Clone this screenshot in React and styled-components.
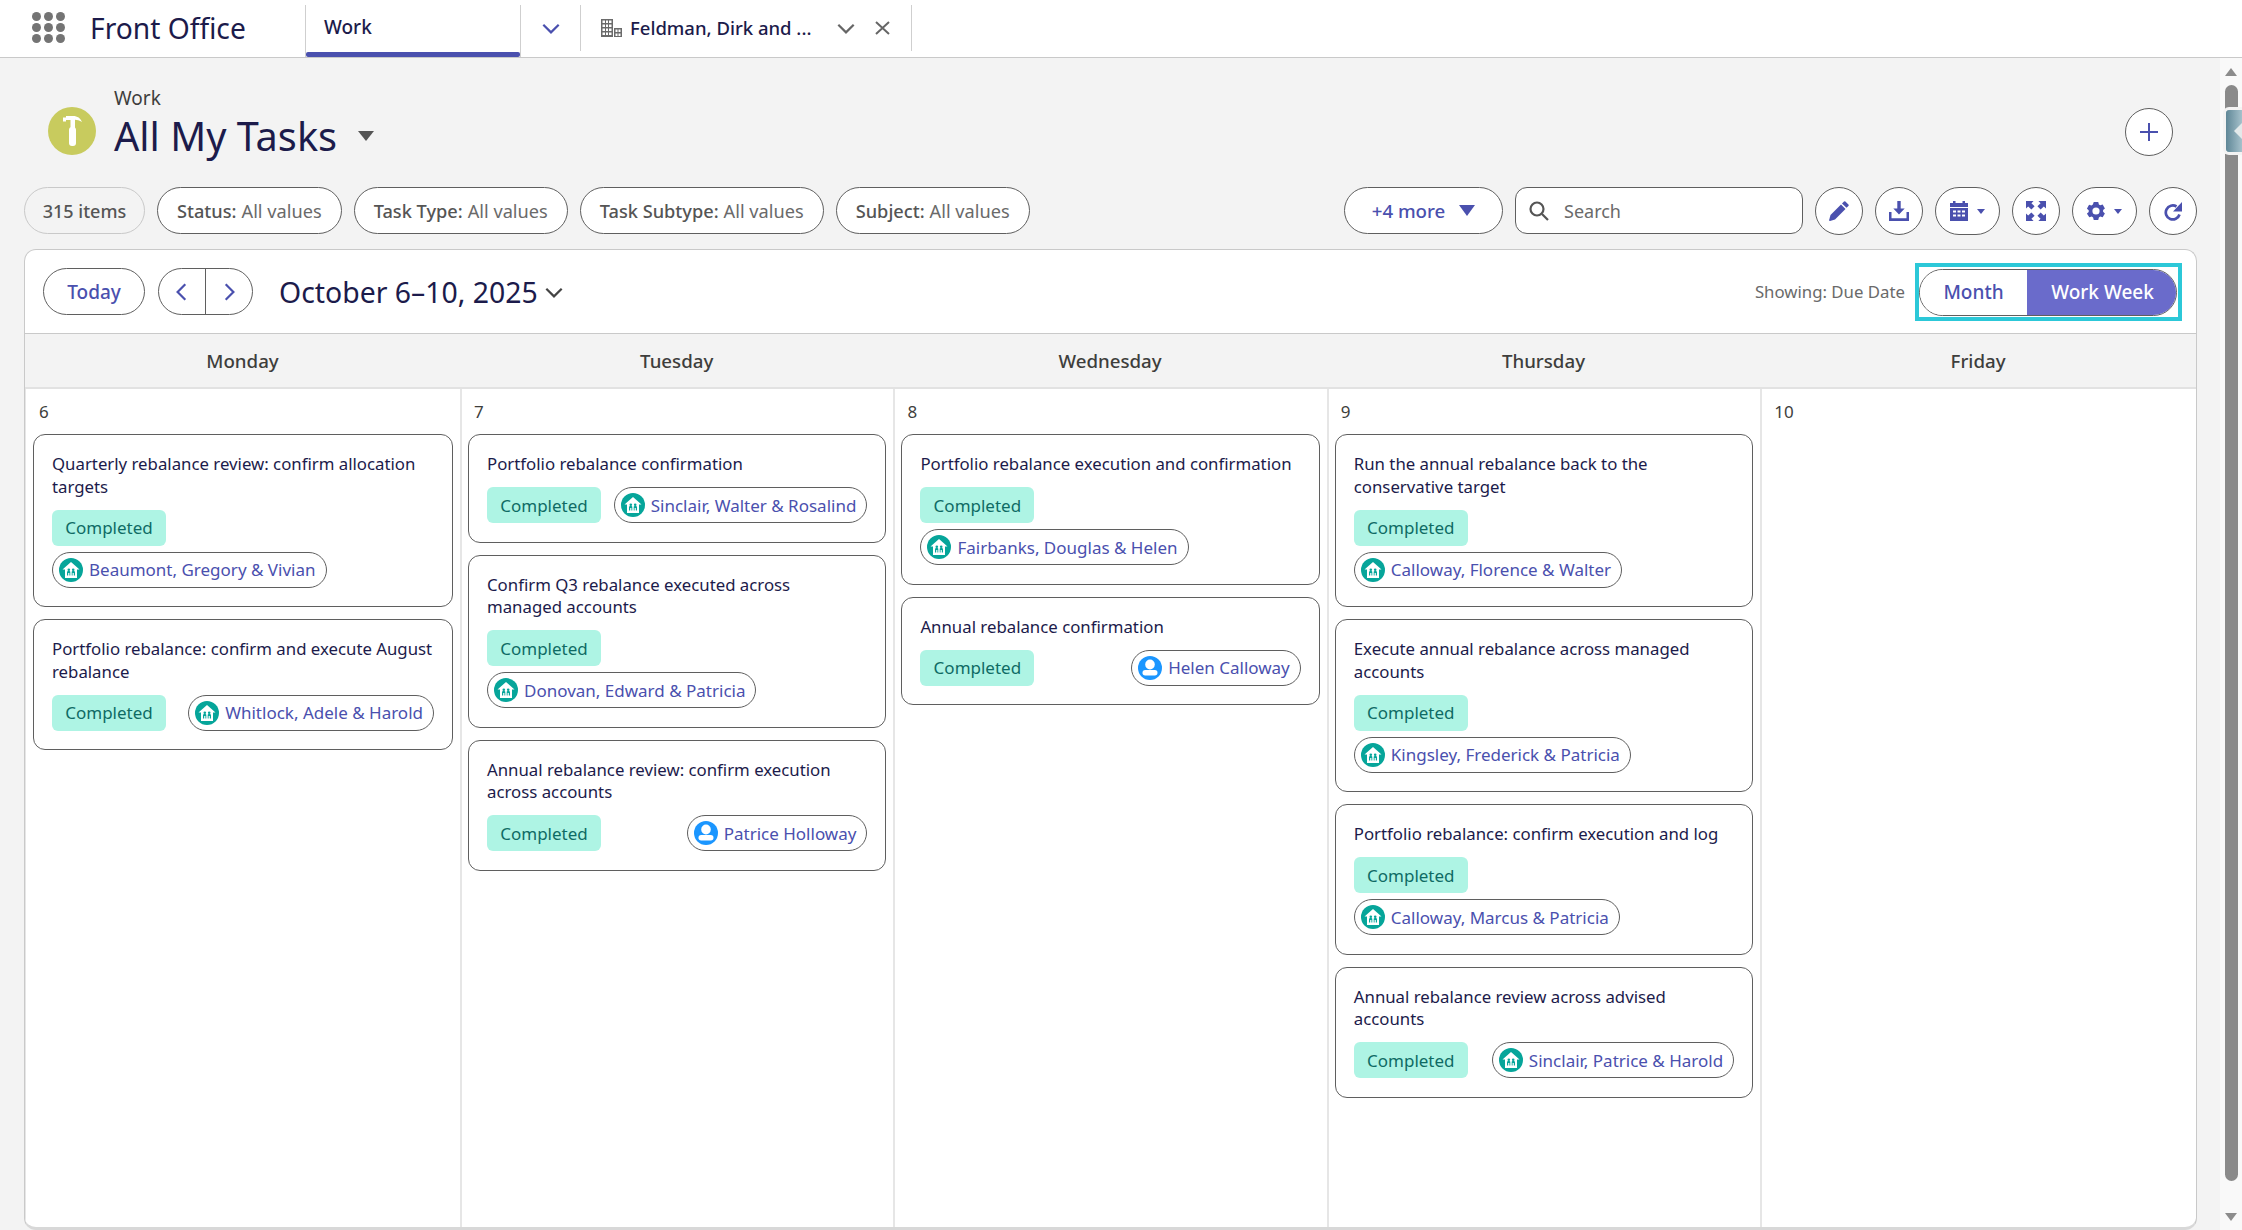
import React from 'react'
import styled, { createGlobalStyle } from 'styled-components'

const INDIGO = '#4a50ae'
const NAVY = '#1c1b4b'
const LINE = '#5f5f5f'
const COLUMNS = '435px repeat(3, 433.400px) 1fr'

const Global = createGlobalStyle`
  html, body {
    margin: 0;
    height: 100%;
    overflow: hidden;
  }
  body {
    background: #f3f3f3;
    font-family: "Noto Sans", "Open Sans", sans-serif;
    color: #3e3e3c;
  }
`

const Shell = styled.div`
  width: 2242px;
  height: 1230px;
  display: flex;
  flex-direction: column;
  overflow: hidden;
`
const TopBar = styled.header`
  height: 58px;
  flex: none;
  box-sizing: border-box;
  background: #fff;
  border-bottom: 1px solid #c9c9c9;
  display: flex;
  align-items: stretch;
  padding: 5px 0 0 32px;
`
const Dots = styled.div`
  width: 33px;
  height: 31px;
  margin-top: 7px;
  display: grid;
  grid-template-columns: repeat(3, 9px);
  grid-auto-rows: 9px;
  justify-content: space-between;
  align-content: space-between;
`
const Dot = styled.i`
  border-radius: 50%;
  background: #747474;
`
const AppName = styled.div`
  width: 240px;
  padding-left: 25px;
  box-sizing: border-box;
  font-size: 28.2px;
  line-height: 46px;
  color: ${NAVY};
  white-space: nowrap;
`
const Tab = styled.div`
  width: 216px;
  box-sizing: border-box;
  border-left: 1px solid #cfcfcf;
  border-right: 1px solid #cfcfcf;
  padding-left: 18px;
  font-size: 19px;
  font-weight: 500;
  line-height: 44px;
  color: ${NAVY};
  position: relative;
  &::after {
    content: '';
    position: absolute;
    left: 0;
    right: 0;
    bottom: 0;
    height: 5px;
    border-radius: 2px;
    background: ${INDIGO};
  }
`
const TabMenu = styled.div`
  width: 60px;
  height: 46px;
  display: flex;
  align-items: center;
  justify-content: center;
  border-right: 1px solid #cfcfcf;
  box-sizing: border-box;
`
const RecordTab = styled.div`
  width: 331px;
  height: 46px;
  box-sizing: border-box;
  display: flex;
  align-items: center;
  padding: 0 0 1px 20px;
  border-right: 1px solid #cfcfcf;
  color: ${NAVY};
  font-size: 18.500px;
  font-weight: 500;
`
const RecordName = styled.span`
  margin-left: 8px;
  width: 205px;
  white-space: nowrap;
`
const RecordClose = styled.svg`
  margin-left: 18px;
`
const Body = styled.div`
  flex: 1;
  min-height: 0;
  display: flex;
`
const Main = styled.main`
  flex: 1;
  min-width: 0;
  padding: 0 23px 0 24px;
  display: flex;
  flex-direction: column;
`
const Heading = styled.div`
  height: 129px;
  flex: none;
  box-sizing: border-box;
  display: flex;
  align-items: flex-start;
  padding: 27px 0 0 24px;
  position: relative;
`
const Badge = styled.div`
  width: 48px;
  height: 48px;
  margin-top: 22px;
  border-radius: 50%;
  background: #c8cb5e;
  display: flex;
  align-items: center;
  justify-content: center;
`
const TitleBlock = styled.div`
  margin-left: 18px;
`
const Crumb = styled.div`
  font-size: 19px;
  line-height: 26px;
  color: #3e3e3c;
`
const PageTitle = styled.h1`
  margin: 0;
  font-size: 39.700px;
  font-weight: 400;
  line-height: 50px;
  color: ${NAVY};
  display: flex;
  align-items: center;
`
const TitleCaret = styled.i`
  margin-left: 21px;
  border-left: 8px solid transparent;
  border-right: 8px solid transparent;
  border-top: 10px solid #555;
`
const Round = styled.button`
  width: ${p => p.$w || 48}px;
  height: 48px;
  flex: none;
  padding: 0;
  box-sizing: border-box;
  border: 1px solid ${LINE};
  border-radius: 24px;
  background: #fff;
  display: flex;
  align-items: center;
  justify-content: center;
  gap: 9px;
  color: ${INDIGO};
`
const AddWrap = styled.div`
  position: absolute;
  right: 24px;
  top: 50px;
`
const Filters = styled.div`
  height: 62px;
  flex: none;
  display: flex;
  align-items: flex-start;
  gap: 12px;
`
const Count = styled.div`
  height: 47px;
  width: 121px;
  box-sizing: border-box;
  border: 1px solid #c9c9c9;
  border-radius: 24px;
  display: flex;
  align-items: center;
  justify-content: center;
  font-size: 18px;
  font-weight: 500;
  color: #555;
`
const Filter = styled.div`
  height: 47px;
  box-sizing: border-box;
  padding: 0 19px;
  border: 1px solid ${LINE};
  border-radius: 24px;
  background: #fff;
  display: flex;
  align-items: center;
  font-size: 18.200px;
  color: #6a6a6a;
  white-space: nowrap;
  b {
    font-weight: 500;
    color: #555;
    margin-right: 5px;
  }
`
const Spacer = styled.div`
  flex: 1;
`
const More = styled.div`
  width: 159px;
  height: 47px;
  box-sizing: border-box;
  border: 1px solid ${LINE};
  border-radius: 24px;
  background: #fff;
  display: flex;
  align-items: center;
  justify-content: center;
  gap: 14px;
  color: ${INDIGO};
  font-size: 18.700px;
  font-weight: 500;
`
const MoreCaret = styled.i`
  border-left: 8px solid transparent;
  border-right: 8px solid transparent;
  border-top: 11px solid ${INDIGO};
`
const Search = styled.div`
  width: 288px;
  height: 47px;
  box-sizing: border-box;
  border: 1px solid ${LINE};
  border-radius: 12px;
  background: #fff;
  display: flex;
  align-items: center;
  gap: 14px;
  padding-left: 12px;
  font-size: 18px;
  color: #6a6a6a;
`
const SmallCaret = styled.i`
  border-left: 4.500px solid transparent;
  border-right: 4.500px solid transparent;
  border-top: 5px solid ${INDIGO};
`
const Panel = styled.section`
  flex: 1;
  min-height: 0;
  box-sizing: border-box;
  background: #fff;
  border: 1px solid #c9c9c9;
  border-bottom: 3px solid #d8d8d8;
  border-radius: 12px;
  display: flex;
  flex-direction: column;
  overflow: hidden;
`
const CalBar = styled.div`
  height: 84px;
  flex: none;
  box-sizing: border-box;
  padding: 0 14px 0 18px;
  display: flex;
  align-items: center;
  border-bottom: 1px solid #c9c9c9;
`
const Today = styled.div`
  width: 102px;
  height: 47px;
  box-sizing: border-box;
  border: 1px solid ${LINE};
  border-radius: 24px;
  display: flex;
  align-items: center;
  justify-content: center;
  color: ${INDIGO};
  font-size: 19px;
  font-weight: 500;
`
const Pager = styled.div`
  margin-left: 13px;
  width: 95px;
  height: 47px;
  box-sizing: border-box;
  border: 1px solid ${LINE};
  border-radius: 24px;
  display: flex;
`
const PageBtn = styled.div`
  flex: 1;
  display: flex;
  align-items: center;
  justify-content: center;
  & + & {
    border-left: 1px solid ${LINE};
  }
`
const RangeTitle = styled.div`
  margin-left: 26px;
  font-size: 28.400px;
  color: ${NAVY};
  display: flex;
  align-items: center;
  gap: 5px;
  white-space: nowrap;
`
const Showing = styled.div`
  margin-left: auto;
  font-size: 16.800px;
  color: #6a6a6a;
  margin-right: 10px;
  white-space: nowrap;
`
const Outline = styled.div`
  padding: 2px 1px 1px 0;
  border: 4px solid #2cc8d8;
  display: flex;
`
const ViewSwitch = styled.div`
  width: 258px;
  height: 47px;
  box-sizing: border-box;
  border: 1px solid ${LINE};
  border-radius: 24px;
  display: flex;
  overflow: hidden;
  font-size: 19px;
  font-weight: 500;
`
const ViewOption = styled.div`
  width: ${p => (p.$active ? 151 : 107)}px;
  flex: none;
  display: flex;
  align-items: center;
  justify-content: center;
  color: ${p => (p.$active ? '#fff' : INDIGO)};
  background: ${p => (p.$active ? '#6a6bcb' : '#fff')};
`
const DayHeads = styled.div`
  height: 55px;
  flex: none;
  box-sizing: border-box;
  background: #f3f3f3;
  border-bottom: 2px solid #e2e2e2;
  display: grid;
  grid-template-columns: ${COLUMNS};
`
const DayHead = styled.div`
  display: flex;
  align-items: center;
  justify-content: center;
  font-size: 18.700px;
  font-weight: 500;
  color: #3e3e3c;
`
const Week = styled.div`
  flex: 1;
  min-height: 0;
  display: grid;
  grid-template-columns: ${COLUMNS};
`
const Day = styled.div`
  box-sizing: border-box;
  padding: 0 7px 0 6px;
  border-left: 2px solid #e6e6e6;
  &:first-child {
    padding-left: 7px;
    border-left: 1px solid #e6e6e6;
  }
`
const DayNum = styled.div`
  height: 45px;
  padding: 11px 0 0 6px;
  box-sizing: border-box;
  font-size: 17px;
  line-height: 24px;
  color: #3e3e3c;
`
const Card = styled.article`
  box-sizing: border-box;
  border: 1px solid ${LINE};
  border-radius: 12px;
  padding: 18px 18px 18.500px;
  & + & {
    margin-top: 12px;
  }
`
const CardTitle = styled.div`
  font-size: 16.800px;
  line-height: 22.500px;
  color: ${NAVY};
`
const Meta = styled.div`
  margin-top: 11.500px;
  display: flex;
  flex-wrap: wrap;
  justify-content: space-between;
  gap: 6px 10px;
`
const Status = styled.div`
  width: 114px;
  height: 36px;
  border-radius: 6px;
  background: #aef4e4;
  color: #0f6b64;
  font-size: 17px;
  display: flex;
  align-items: center;
  justify-content: center;
`
const Who = styled.div`
  height: 36px;
  box-sizing: border-box;
  border: 1px solid ${LINE};
  border-radius: 18px;
  padding: 0 10px 0 6px;
  display: flex;
  align-items: center;
  gap: 6px;
  color: ${INDIGO};
  font-size: 17px;
  white-space: nowrap;
`
const Avatar = styled.span`
  width: 24px;
  height: 24px;
  flex: none;
  border-radius: 50%;
  background: ${p => (p.$person ? '#1b96ff' : '#06a59a')};
  display: flex;
  align-items: center;
  justify-content: center;
`
const ScrollBar = styled.aside`
  width: 22px;
  flex: none;
  background: #f9f9f9;
  position: relative;
  display: flex;
  flex-direction: column;
  align-items: center;
`
const ScrollArrow = styled.i`
  margin-top: ${p => (p.$down ? '32px' : '10px')};
  border-left: 6px solid transparent;
  border-right: 6px solid transparent;
  ${p => (p.$down ? 'border-top' : 'border-bottom')}: 8px solid #8c8c8c;
`
const ScrollThumb = styled.div`
  width: 13px;
  height: 1096px;
  margin-top: 9px;
  border-radius: 7px;
  background: #8a8a8a;
`
const Handle = styled.div`
  position: absolute;
  left: 3px;
  top: 49px;
  width: 19px;
  height: 48px;
  box-sizing: border-box;
  border: 3px solid #f3f3f3;
  border-right: 0;
  border-radius: 6px 0 0 6px;
  background: linear-gradient(90deg, #5f8797, #a6c1cb);
  display: flex;
  align-items: center;
  justify-content: flex-end;
`
const HandleTip = styled.i`
  border-top: 8px solid transparent;
  border-bottom: 8px solid transparent;
  border-right: 8px solid #e3e9ea;
`

const Chevron = ({ dir = 'down', color = INDIGO, size = 22 }) => {
  const points = { down: '3,7 10,14 17,7', left: '13,3 6,10 13,17', right: '7,3 14,10 7,17' }
  return (
    <svg width={size} height={size} viewBox="0 0 20 20" fill="none" stroke={color} strokeWidth="2">
      <polyline points={points[dir]} />
    </svg>
  )
}

const Building = () => (
  <svg width="21" height="18" viewBox="0 0 21 18" fill="#6b6b6b">
    <path fillRule="evenodd" d="M0 0h12v18H0zM1.500 1.500v2.500h2.500V1.500zm3.500 0v2.500h2V1.500zm3 0v2.500h2.500V1.500zM1.500 5.500V8h2.500V5.500zm3.500 0V8h2V5.500zm3 0V8h2.500V5.500zM1.500 9.500V12h2.500V9.500zm3.500 0V12h2V9.500zm3 0V12h2.500V9.500zM1.500 13.500V16h2.500v-2.500zm3.500 0V16h2v-2.500zm3 0V16h2.500v-2.500z" />
    <path fillRule="evenodd" d="M13 9h8v9h-8zm1.500 1.500V13h2v-2.500zm3 0V13h2v-2.500zm-3 4V17h2v-2.500zm3 0V17h2v-2.500z" />
  </svg>
)

const Hammer = () => (
  <svg width="19" height="30" viewBox="0 0 19 30" fill="#fff">
    <path d="M0 1.500h3V0h7c4.500 0 7.500 2.300 9 6-2.500-1.500-5-2.300-7-2.300V6H7.500V4H3V5.500H0z" />
    <rect x="7.500" y="6" width="4.500" height="9" />
    <rect x="6" y="11" width="7" height="19" rx="3" />
  </svg>
)

const HouseIcon = () => (
  <svg width="18" height="18" viewBox="0 0 18 18">
    <path fill="#fff" d="M9 1 17.500 8.500H15V17H3V8.500H.5z" />
    <g fill="#06a59a">
      <circle cx="6.800" cy="8.800" r="1.300" />
      <circle cx="11.200" cy="8.800" r="1.300" />
      <path d="M5 11c0-.7.900-1 1.800-1s1.500.3 1.500 1v3.500H7.400V12H6.200v2.500H5z" />
      <path d="M9.700 11c0-.7.600-1 1.500-1s1.800.3 1.800 1v3.500h-1.200V12h-1.200v2.500h-.9z" />
    </g>
  </svg>
)

const PersonIcon = () => (
  <svg width="24" height="24" viewBox="0 0 24 24" fill="#fff">
    <ellipse cx="12" cy="8.500" rx="4.800" ry="5" />
    <rect x="4.500" y="14" width="15" height="5.500" rx="2.700" />
  </svg>
)

const PencilIcon = () => (
  <svg width="20" height="20" viewBox="0 0 20 20" fill={INDIGO}>
    <path d="M15 0.500a1 1 0 0 1 1.400 0l3 3a1 1 0 0 1 0 1.400L17.500 6.800 13 2.500z" />
    <path d="M12 3.500 16.500 8 6 18.500 1 20l-1-.5L1.500 14z" />
  </svg>
)

const Download = () => (
  <svg width="20" height="20" viewBox="0 0 20 20" fill={INDIGO}>
    <path d="M8.300 0h3.400v7.500h4L10 13.500l-5.700-6h4z" />
    <path d="M0 11h2.500v6.300h15V11H20v9H0z" />
  </svg>
)

const CalendarIcon = () => (
  <svg width="18" height="20" viewBox="0 0 18 20" fill={INDIGO}>
    <path fillRule="evenodd" d="M3 0h2.500v2h7V0H15v2h3v4H0V2h3zM0 7h18v13H0zM3 9.500v2h3v-2zm4.500 0v2h3v-2zm4.500 0v2h3v-2zM3 13.500v2h3v-2zm4.500 0v2h3v-2zm4.500 0v2h3v-2z" />
  </svg>
)

const Expand = () => (
  <svg width="20" height="20" viewBox="0 0 21 21" fill={INDIGO}>
    <path d="M0 0h8L5.700 2.300 9 5.600 5.600 9 2.300 5.700 0 8z" />
    <path d="M21 0v8l-2.300-2.300L15.400 9 12 5.600l3.300-3.300L13 0z" />
    <path d="M0 21v-8l2.300 2.300L5.600 12 9 15.400l-3.300 3.300L8 21z" />
    <path d="M21 21h-8l2.300-2.300L12 15.400 15.400 12l3.300 3.300L21 13z" />
  </svg>
)

const Gear = () => (
  <svg width="18" height="20" viewBox="0 0 20 20" fill={INDIGO}>
    <path fillRule="evenodd" d="M7.500 0h5l.7 2.700 1.500.9 2.700-.8 2.500 4.300-2 1.900v1.800l2 1.900-2.500 4.300-2.700-.8-1.500.9-.7 2.800h-5l-.7-2.800-1.500-.9-2.700.8L-.1 13l2-1.900V9.300L-.1 7.400 2.300 3l2.700.8 1.500-.9zM10 6a4 4 0 1 0 0 8 4 4 0 0 0 0-8z" />
  </svg>
)

const Refresh = () => (
  <svg width="18" height="19" viewBox="0 0 18 19" fill="none" stroke={INDIGO} strokeWidth="2.700">
    <path d="M15.500 12.500A7 7 0 1 1 12.500 4.500" />
    <path d="M18 0v9.500H9z" fill={INDIGO} stroke="none" />
  </svg>
)

const SearchIcon = () => (
  <svg width="22" height="22" viewBox="0 0 22 22" fill="none" stroke="#555" strokeWidth="2.200">
    <circle cx="9" cy="9" r="6.500" />
    <line x1="14" y1="14" x2="20" y2="20" />
  </svg>
)

const Plus = () => (
  <svg width="22" height="22" viewBox="0 0 22 22" stroke={INDIGO} strokeWidth="2">
    <line x1="11" y1="2" x2="11" y2="20" />
    <line x1="2" y1="11" x2="20" y2="11" />
  </svg>
)

const days = [
  {
    name: 'Monday', num: 6,
    tasks: [
      { title: 'Quarterly rebalance review: confirm allocation targets', who: 'Beaumont, Gregory & Vivian' },
      { title: 'Portfolio rebalance: confirm and execute August rebalance', who: 'Whitlock, Adele & Harold' },
    ],
  },
  {
    name: 'Tuesday', num: 7,
    tasks: [
      { title: 'Portfolio rebalance confirmation', who: 'Sinclair, Walter & Rosalind' },
      { title: 'Confirm Q3 rebalance executed across managed accounts', who: 'Donovan, Edward & Patricia' },
      { title: 'Annual rebalance review: confirm execution across accounts', who: 'Patrice Holloway', person: true },
    ],
  },
  {
    name: 'Wednesday', num: 8,
    tasks: [
      { title: 'Portfolio rebalance execution and confirmation', who: 'Fairbanks, Douglas & Helen' },
      { title: 'Annual rebalance confirmation', who: 'Helen Calloway', person: true },
    ],
  },
  {
    name: 'Thursday', num: 9,
    tasks: [
      { title: 'Run the annual rebalance back to the conservative target', who: 'Calloway, Florence & Walter' },
      { title: 'Execute annual rebalance across managed accounts', who: 'Kingsley, Frederick & Patricia' },
      { title: 'Portfolio rebalance: confirm execution and log', who: 'Calloway, Marcus & Patricia' },
      { title: 'Annual rebalance review across advised accounts', who: 'Sinclair, Patrice & Harold' },
    ],
  },
  { name: 'Friday', num: 10, tasks: [] },
]

const filters = ['Status', 'Task Type', 'Task Subtype', 'Subject']

const TaskCard = ({ task }) => (
  <Card>
    <CardTitle>{task.title}</CardTitle>
    <Meta>
      <Status>Completed</Status>
      <Who>
        <Avatar $person={task.person}>{task.person ? <PersonIcon /> : <HouseIcon />}</Avatar>
        {task.who}
      </Who>
    </Meta>
  </Card>
)

const App = () => (
  <Shell>
    <Global />
    <TopBar>
      <Dots>{Array.from({ length: 9 }, (_, i) => <Dot key={i} />)}</Dots>
      <AppName>Front Office</AppName>
      <Tab>Work</Tab>
      <TabMenu><Chevron /></TabMenu>
      <RecordTab>
        <Building />
        <RecordName>Feldman, Dirk and ...</RecordName>
        <Chevron color="#666" />
        <RecordClose width="15" height="14" viewBox="0 0 15 14" stroke="#666" strokeWidth="2">
          <path d="M1 1l13 12M14 1L1 13" />
        </RecordClose>
      </RecordTab>
    </TopBar>
    <Body>
      <Main>
        <Heading>
          <Badge><Hammer /></Badge>
          <TitleBlock>
            <Crumb>Work</Crumb>
            <PageTitle>All My Tasks<TitleCaret /></PageTitle>
          </TitleBlock>
          <AddWrap><Round><Plus /></Round></AddWrap>
        </Heading>
        <Filters>
          <Count>315 items</Count>
          {filters.map(f => <Filter key={f}><b>{f}:</b> All values</Filter>)}
          <Spacer />
          <More>+4 more<MoreCaret /></More>
          <Search><SearchIcon />Search</Search>
          <Round><PencilIcon /></Round>
          <Round><Download /></Round>
          <Round $w={65}><CalendarIcon /><SmallCaret /></Round>
          <Round><Expand /></Round>
          <Round $w={65}><Gear /><SmallCaret /></Round>
          <Round><Refresh /></Round>
        </Filters>
        <Panel>
          <CalBar>
            <Today>Today</Today>
            <Pager>
              <PageBtn><Chevron dir="left" /></PageBtn>
              <PageBtn><Chevron dir="right" /></PageBtn>
            </Pager>
            <RangeTitle>October 6–10, 2025<Chevron color="#444" /></RangeTitle>
            <Showing>Showing: Due Date</Showing>
            <Outline>
              <ViewSwitch>
                <ViewOption>Month</ViewOption>
                <ViewOption $active>Work Week</ViewOption>
              </ViewSwitch>
            </Outline>
          </CalBar>
          <DayHeads>{days.map(d => <DayHead key={d.name}>{d.name}</DayHead>)}</DayHeads>
          <Week>
            {days.map(d => (
              <Day key={d.name}>
                <DayNum>{d.num}</DayNum>
                {d.tasks.map(t => <TaskCard key={t.title} task={t} />)}
              </Day>
            ))}
          </Week>
        </Panel>
      </Main>
      <ScrollBar>
        <ScrollArrow />
        <ScrollThumb />
        <ScrollArrow $down />
        <Handle><HandleTip /></Handle>
      </ScrollBar>
    </Body>
  </Shell>
)

export default App
